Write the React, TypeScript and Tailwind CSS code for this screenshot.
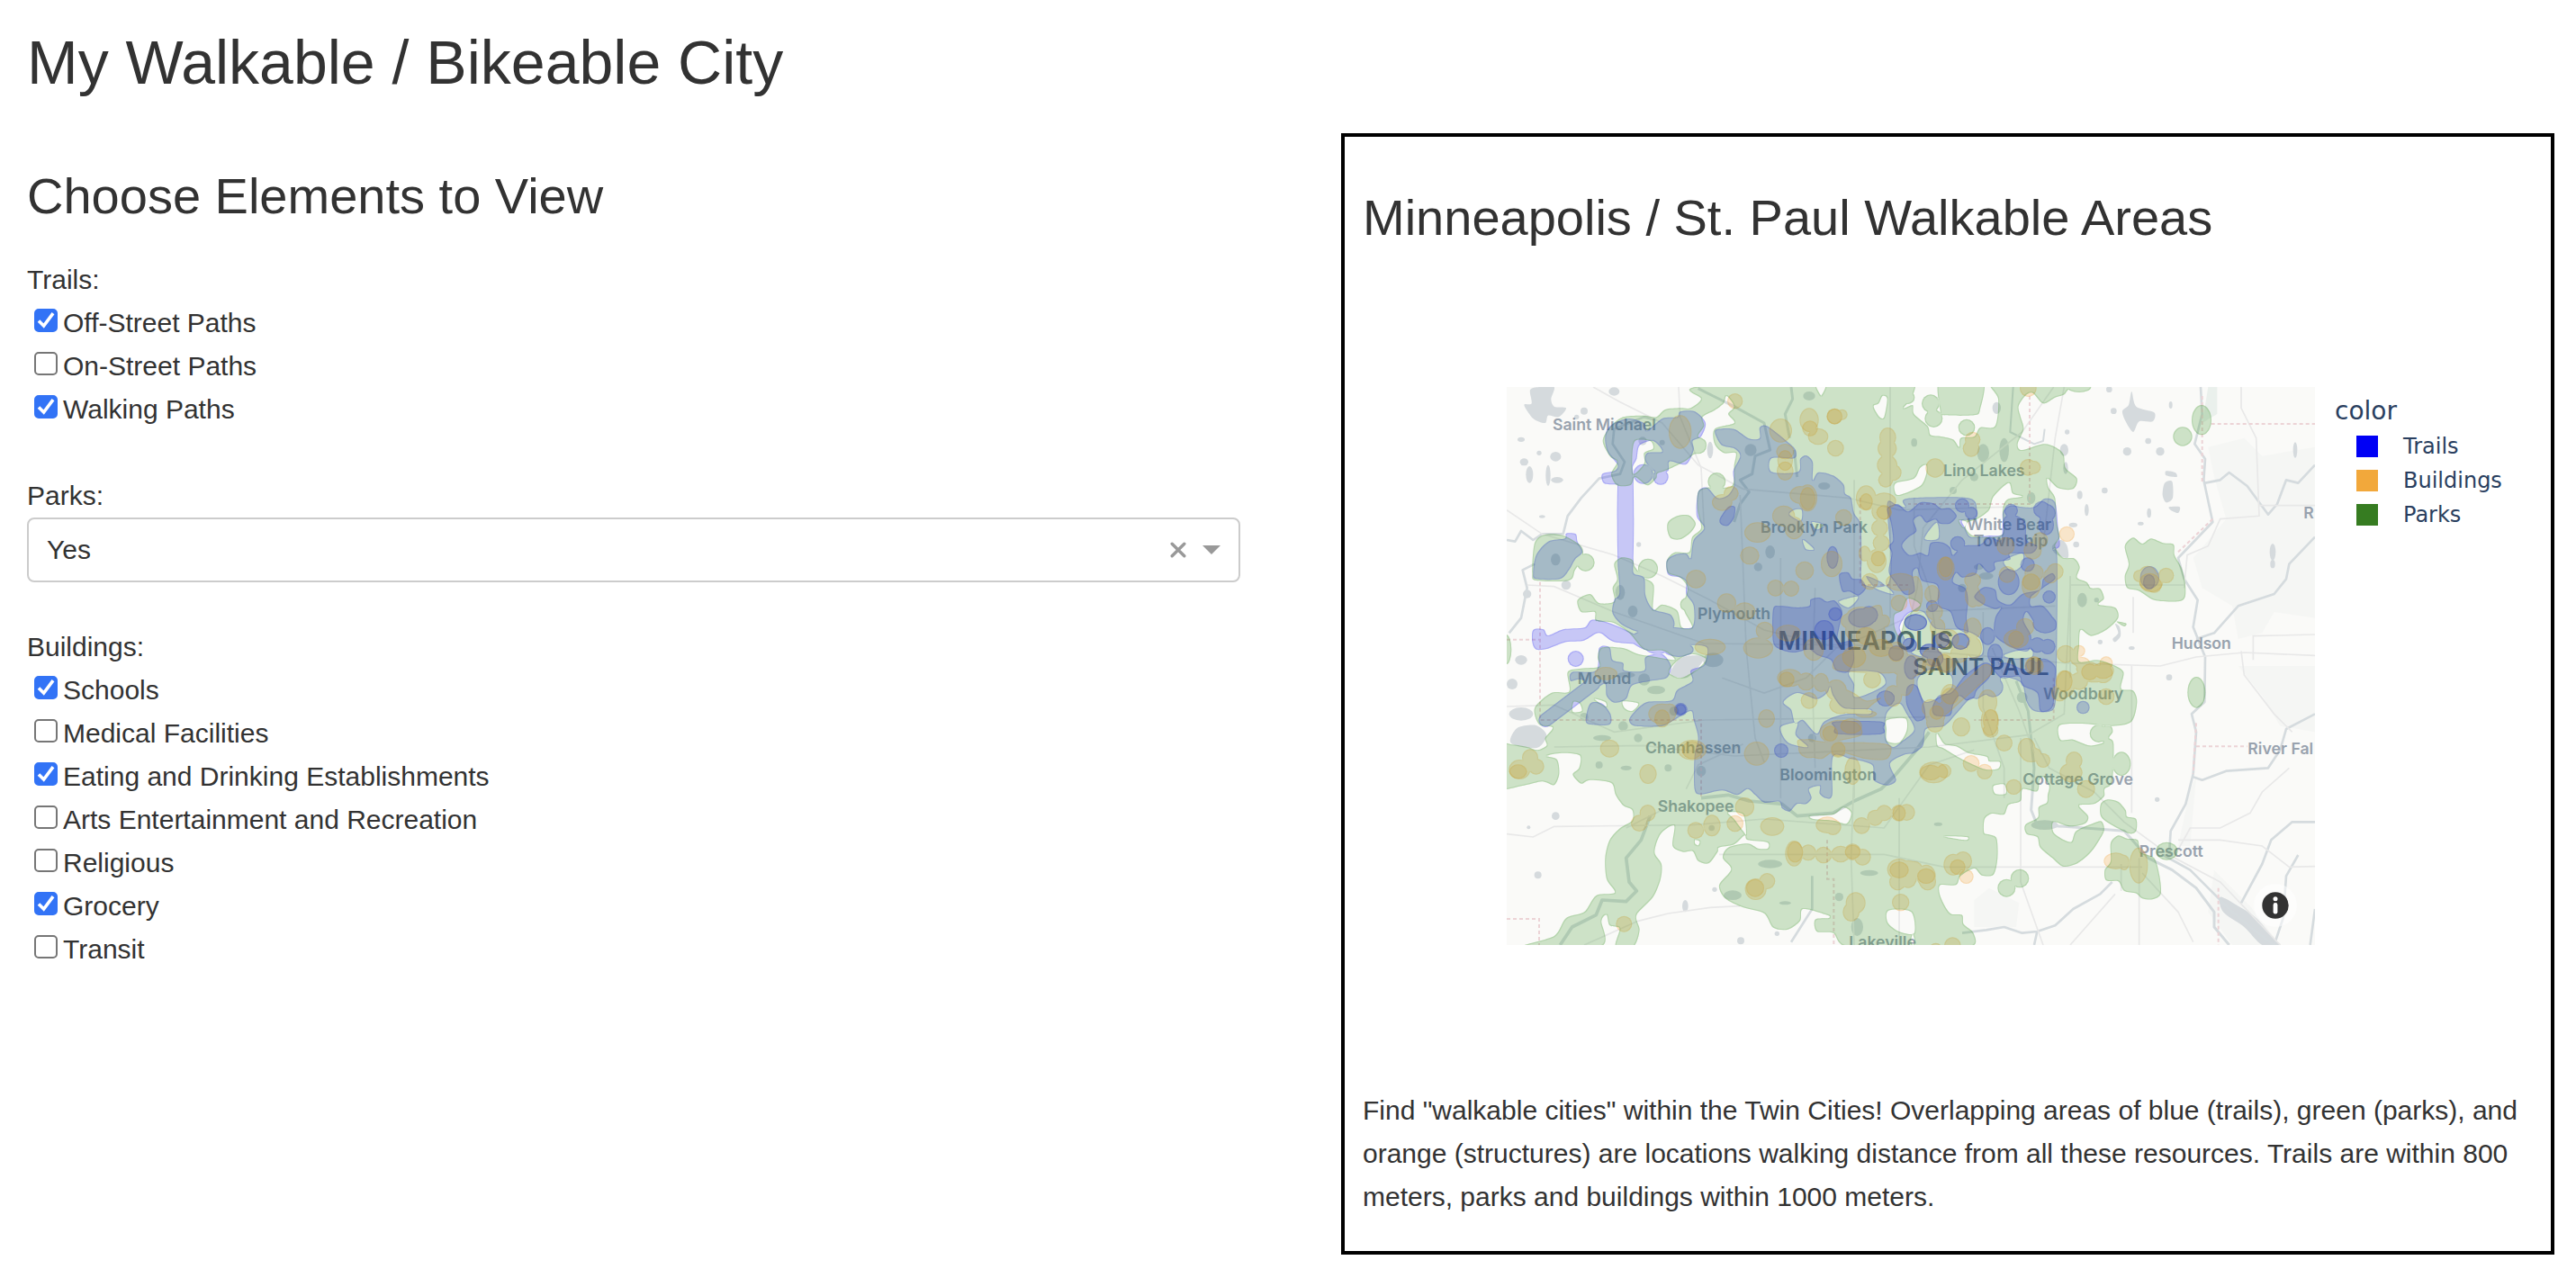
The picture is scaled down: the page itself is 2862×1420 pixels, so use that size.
import { useState } from "react";

type Option = { label: string; checked: boolean };

const trails: Option[] = [
  { label: "Off-Street Paths", checked: true },
  { label: "On-Street Paths", checked: false },
  { label: "Walking Paths", checked: true },
];

const buildings: Option[] = [
  { label: "Schools", checked: true },
  { label: "Medical Facilities", checked: false },
  { label: "Eating and Drinking Establishments", checked: true },
  { label: "Arts Entertainment and Recreation", checked: false },
  { label: "Religious", checked: false },
  { label: "Grocery", checked: true },
  { label: "Transit", checked: false },
];

function CheckGroup({ title, options }: { title: string; options: Option[] }) {
  return (
    <fieldset>
      <legend>{title}</legend>
      {options.map((o) => (
        <label key={o.label} className="flex w-fit items-start pl-2">
          <span className="relative mt-2 mr-1.5 size-[26px]">
            <input
              type="checkbox"
              defaultChecked={o.checked}
              className="peer block size-full appearance-none rounded-[5px] border-2 border-[#767676] bg-white checked:border-[#3273f6] checked:bg-[#3273f6]"
            />
            <svg viewBox="0 0 26 26" className="pointer-events-none invisible absolute inset-0 peer-checked:visible" fill="none" stroke="#fff" strokeWidth="3.6">
              <path d="M5 13.5L10.6 19 21 5.2" />
            </svg>
          </span>
          {o.label}
        </label>
      ))}
    </fieldset>
  );
}

/* Turns "x,y x,y ..." into a closed smooth curve through the points. */
function blob(points: string) {
  const p = points.trim().split(/\s+/).map((s) => s.split(",").map(Number));
  const n = p.length;
  let d = `M${p[0][0]} ${p[0][1]}`;
  for (let i = 0; i < n; i++) {
    const a = p[(i + n - 1) % n], b = p[i], c = p[(i + 1) % n], e = p[(i + 2) % n];
    const k = 7;
    d += `C${b[0] + (c[0] - a[0]) / k} ${b[1] + (c[1] - a[1]) / k} ${c[0] - (e[0] - b[0]) / k} ${c[1] - (e[1] - b[1]) / k} ${c[0]} ${c[1]}`;
  }
  return d + "Z";
}

function Discs({ at }: { at: string }) {
  return (
    <>
      {at.trim().split(/\s+/).map((s, i) => {
        const [x, y, rx, ry] = s.split(",").map(Number);
        return <ellipse key={i} cx={x} cy={y} rx={rx} ry={ry || rx} />;
      })}
    </>
  );
}

const parksMain = [
  "670,30 690,70 655,100 620,100 570,105 540,130 500,125 430,130 385,165 362,210 385,260 410,280 390,320 410,358 455,357 470,330 510,358 540,335 545,318 580,305 640,275 665,255 700,245 705,210 680,195 700,160 695,130 735,108 765,85 775,60 800,95 780,120 800,150 735,170 735,220 765,250 805,250 800,290 792,360 710,365 680,380 678,440 690,500 660,530 650,580 600,582 575,610 580,650 620,665 645,700 632,750 635,780 660,830 625,830 610,775 560,755 530,772 532,690 500,665 470,630 460,605 425,598 400,620 410,670 395,700 400,745 350,750 320,720 278,740 290,780 335,780 340,810 395,815 450,850 500,905 560,908 590,925 600,940 540,930 480,920 430,900 360,898 345,930 350,962 290,968 245,980 250,1045 190,1050 135,1100 150,1155 195,1165 170,1200 175,1225 145,1240 110,1230 60,1222 0,1222 0,1365 100,1358 160,1345 200,1357 217,1320 210,1272 175,1260 225,1250 285,1258 283,1300 262,1322 290,1352 320,1340 390,1350 405,1390 430,1425 460,1440 460,1475 420,1500 385,1540 370,1600 375,1670 402,1715 340,1725 300,1780 240,1800 200,1860 100,1895 355,1895 358,1810 375,1790 385,1825 418,1835 405,1895 465,1895 485,1840 475,1790 530,1730 555,1670 558,1620 535,1580 555,1520 600,1492 595,1560 630,1580 662,1578 680,1610 715,1618 745,1580 750,1565 800,1555 835,1525 845,1540 910,1548 912,1568 880,1568 845,1552 780,1565 762,1600 790,1638 750,1690 770,1735 830,1765 900,1785 930,1832 980,1838 1020,1810 1030,1770 1110,1790 1115,1800 1070,1805 1075,1845 1130,1850 1175,1895 1385,1895 1395,1850 1405,1895 1590,1895 1598,1850 1565,1820 1560,1790 1525,1787 1505,1765 1485,1720 1488,1690 1540,1690 1555,1660 1600,1635 1625,1658 1665,1655 1678,1600 1675,1535 1650,1522 1633,1515 1635,1470 1660,1452 1700,1455 1715,1423 1755,1410 1762,1370 1810,1378 1818,1340 1830,1330 1850,1360 1845,1390 1842,1415 1815,1430 1812,1465 1770,1490 1775,1520 1810,1530 1820,1565 1860,1600 1895,1628 1940,1620 1980,1590 2005,1560 2033,1510 2025,1478 1995,1485 1940,1510 1925,1545 1900,1540 1865,1515 1865,1480 1920,1495 1970,1485 1980,1460 1950,1425 2000,1420 2033,1395 2035,1370 2060,1345 2065,1220 2050,1200 2062,1180 2055,1160 2020,1165 2010,1200 2030,1215 1985,1225 1930,1205 1888,1205 1885,1158 1960,1152 2060,1160 2125,1145 2143,1080 2130,1042 2090,1035 2098,980 2060,955 2010,940 1950,945 1950,890 1955,840 1990,860 2040,840 2080,800 2070,765 2015,755 2033,735 2020,702 1990,700 1975,680 1943,665 1952,630 1935,602 1895,598 1870,560 1885,530 1875,480 1870,400 1848,365 1845,335 1880,367 1930,370 1943,335 1905,300 1898,255 1870,230 1830,220 1760,240 1745,220 1765,170 1755,130 1748,95 1770,60 1795,50 1830,85 1870,65 1905,50 1910,0 1655,0 1680,70 1670,160 1620,165 1600,195 1555,200 1550,230 1530,205 1490,195 1455,190 1445,160 1400,120 1395,90 1365,100 1395,60 1380,0 1090,0 1090,60 1075,0",
  "1295,60 1310,70 1300,130 1285,130 1265,95 1282,85",
  "1340,350 1400,335 1420,300 1440,290 1440,320 1420,360 1350,390 1335,375",
  "1580,480 1610,470 1650,440 1665,395 1715,350 1728,385 1760,395 1710,405 1695,440 1695,520 1640,530 1595,525 1572,500",
  "470,210 520,210 530,235 500,250 500,285 465,320 460,270",
  "590,965 620,935 660,920 705,935 690,960 655,985 620,1000 585,985",
  "1055,1460 1130,1455 1165,1432 1190,1450 1175,1485 1130,1475 1065,1470",
  "1310,1140 1370,1135 1375,1175 1350,1215 1310,1210 1308,1170",
  "1476,1185 1500,1220 1540,1228 1580,1250 1640,1262 1650,1278 1685,1280 1680,1302 1640,1305 1600,1290 1550,1265 1500,1235 1478,1225",
  "265,1080 285,1085 292,1110 262,1112",
  "780,1448 830,1455 840,1520 830,1510 800,1470",
  "1315,1775 1390,1780 1400,1850 1350,1845 1312,1815",
  "1500,1528 1575,1530 1570,1540",
  "1665,1360 1700,1355 1705,1385 1670,1385",
  "670,1540 685,1545 680,1558 670,1552",
  "335,1070 370,1080 372,1095",
  "430,1078 480,1085 460,1110 435,1100",
  "1335,790 1360,775 1380,735 1420,755 1390,780 1370,800 1352,860 1335,830",
  "1550,475 1575,480 1565,498",
  "2075,812 2107,818 2100,828",
];

const parksExtra = [
  "127,650 135,550 170,522 230,525 290,560 295,600 270,640 250,675 140,675",
  "580,480 610,460 650,458 672,485 655,515 620,538 590,535 578,510",
  "2102,560 2130,532 2160,552 2190,535 2230,550 2265,555 2268,590 2290,630 2303,680 2303,730 2280,745 2200,740 2150,710 2110,700 2102,660 2115,620",
  "2022,1420 2045,1405 2080,1412 2105,1440 2110,1462 2140,1470 2140,1510 2115,1518 2050,1485 2022,1460",
  "2055,1550 2080,1525 2110,1535 2145,1540 2155,1580 2200,1600 2218,1660 2222,1720 2195,1738 2160,1735 2140,1718 2100,1710 2080,1678 2040,1675 2035,1640 2055,1610",
  "1487,0 1487,110 1500,124 1600,124 1620,105 1628,0",
];

const trailMain = [
  "740,172 800,170 850,202 885,200 885,165 910,160 975,210 1005,240 1000,268 925,268 925,313 1013,313 1020,270 1040,258 1062,280 1062,340 1080,315 1130,325 1165,355 1170,385 1190,400 1200,450 1222,490 1225,600 1230,685 1310,690 1322,600 1310,420 1340,422 1370,430 1375,402 1580,400 1610,440 1605,470 1560,475 1570,500 1590,530 1650,525 1695,520 1695,450 1720,425 1760,430 1800,430 1835,402 1870,415 1880,500 1885,560 1860,575 1877,600 1875,980 1870,1090 1850,1112 1800,1110 1775,1080 1760,1020 1720,1000 1690,1000 1690,1050 1640,1055 1610,1070 1585,1070 1540,1120 1500,1160 1440,1170 1430,1225 1400,1250 1370,1255 1320,1285 1340,1340 1310,1358 1265,1340 1260,1290 1190,1270 1130,1262 1127,1390 1105,1400 1085,1385 1085,1360 1050,1370 1058,1400 1040,1420 1010,1420 985,1445 960,1435 950,1412 900,1415 870,1390 845,1370 810,1390 760,1375 690,1388 668,1370 668,1260 680,1200 665,1140 655,1110 600,1140 560,1160 470,1160 450,1140 470,1110 510,1080 590,1075 610,1040 660,1010 655,975 700,955 710,900 665,890 600,895 570,912 500,905 450,870 505,835 590,830 660,830 665,760 640,720 640,680 620,665 580,655 575,610 600,590 640,585 655,600 665,540 700,500 675,460 680,380 710,365 745,400 780,390 800,355 797,310 820,260 800,235 760,225 740,195",
  "965,1080 1010,1050 1075,1070 1110,1050 1120,1030 1130,1060 1165,1100 1250,1105 1250,1120 1170,1120 1100,1145 1075,1185 1030,1140 1003,1150 990,1105",
  "1185,980 1280,982 1303,1020 1240,1055 1200,1062 1200,1020",
  "955,1165 1010,1150 1005,1190 1045,1230 980,1215",
  "1308,1120 1350,1085 1375,1120 1400,1172 1360,1210 1330,1230 1305,1200",
  "1435,535 1475,482 1480,535",
  "1700,610 1760,585 1760,620 1740,640 1720,640",
  "1150,745 1210,728 1205,745 1180,765",
  "1000,440 1025,440 1022,475 985,455",
  "1060,480 1100,490 1075,505",
  "1030,540 1065,570 1040,570",
  "1240,660 1290,680 1330,720 1270,700",
  "1352,830 1380,785 1430,780 1470,835 1560,840 1620,870 1620,925 1500,935 1400,920 1365,860",
  "1415,1000 1460,970 1520,990 1525,1030 1490,1060 1440,1080 1415,1040",
  "1700,925 1740,910 1790,905 1790,930 1730,935",
];

const trailExtra = [
  "415,598 461,598 465,650 500,665 505,725 530,770 590,790 595,835 500,850 430,825 395,785 400,740 418,715",
  "400,150 450,135 500,150 510,175 560,135 610,130 620,112 670,112 705,150 690,195 662,210 665,240 640,288 585,278 580,310 540,315 505,280 510,250 560,245 530,210 485,225 475,270 461,300 461,355 400,355 365,350 360,320 400,310 412,290 380,250 370,210 375,175",
  "415,290 461,290 461,650 415,650",
  "130,650 140,590 180,545 235,535 240,518 272,520 278,545 295,580 270,605 250,640 220,670 140,670",
  "350,900 385,898 395,940 430,950 435,975 500,975 505,930 560,920 590,960 575,1000 520,1010 460,1025 440,1070 400,1082 375,1060 370,1020 340,1030 290,1005 255,1010 260,980 340,975",
  "305,1140 320,1085 360,1085 388,1120 385,1155 320,1155",
];

const trails2 = [
  "930,770 955,760 1010,765 1050,760 1055,738 1085,732 1108,745 1135,742 1160,775 1155,810 1145,880 1190,878 1200,940 1180,980 1140,975 1122,940 1080,925 1050,905 1000,915 955,905 930,880",
  "1150,655 1180,648 1195,668 1225,672 1240,700 1215,725 1185,712 1160,710",
  "1135,1145 1290,1145 1298,1165 1290,1187 1145,1187 1135,1165",
  "752,470 780,430 803,430 800,465 780,492 757,488",
];

const disc2 = "1100,840,33 1137,787,23 957,1242,24 622,1105,22 1128,598,20,38 1305,1068,30,26 2185,665,32,38 1225,800,45,32 1250,790,30 1790,960,20";

/* Saint Paul side, in its own local grid. */
const eastTrails2 = [
  "80,75 115,60 150,85 190,55 235,58 260,75 290,75 312,100 290,125 255,125 240,112 210,122 190,100 168,115 178,150 150,172 130,200 155,230 190,222 215,230 225,190 265,188 290,205 300,230 330,200 390,195 420,170 460,180 468,110 500,95 540,120 545,180 580,200 560,225 490,225 490,245 440,255 440,278 415,288 385,260 375,295 330,305 310,290 300,320 340,340 350,380 345,440 350,490 310,470 290,420 250,400 250,340 235,325 195,315 180,275 165,290 172,350 140,362 105,320 85,285 95,225 85,200 100,180 92,120",
  "400,338 440,345 450,380 490,395 530,360 590,345 600,310 630,290 640,310 600,340 560,370 560,400 600,400 640,450 640,480 600,490 570,455 545,420 535,450 560,500 550,550 500,540 440,500 440,440 460,405 440,410 400,395 370,370",
  "430,600 480,590 540,610 600,575 640,600 640,650 635,725 620,748 590,750 580,690 530,665 520,635 460,640",
  "310,670 340,630 400,590 430,600 420,640 380,680 370,705 345,715 320,700 300,730 290,765 240,765 230,740 250,700 290,690",
  "145,675 165,660 185,675 205,740 205,775 175,782 145,730",
];
const eastDiscs2 = "330,65,24 360,90,21 315,192,25 595,78,28 612,90,30 610,130,26,34 493,82,23 485,320,36,44 548,262,24 620,370,22 605,460,40,30 580,530,26 615,535,26 440,560,26,34 415,500,25,30 75,708,30,26 160,605,24,40 230,400,20 110,557,26";
const eastDiscsOpen = "175,455,38,28 325,518,30,28 260,515,28,26 220,550,32,24 240,575,28 155,530,24";

const orange = "803,77,26 620,180,38,56 955,175,38,40 1050,140,32,40 1080,195,34,28 1135,128,27 1160,122,18 1138,234,28 970,245,30,26 970,310,28,32 1312,198,28,33 1310,235,32 1310,290,34 1330,315,28 1305,340,25 790,385,25 760,415,34,28 1020,390,35,30 1045,400,32,45 965,460,38,35 1000,500,32,38 878,515,44,34 852,592,32,30 1165,465,28 1240,400,34,42 1300,410,40,28 1290,445,32 1285,500,28 1290,550,28 1275,610,33,40 1235,585,20,26 1252,678,28 1035,642,31 1125,620,36,44 938,700,28 990,702,27 673,670,33,31 775,750,32,32 835,778,36,30 902,842,30 980,850,42,28 720,897,52,28 880,900,50,35 1065,905,34,38 1350,750,28 1355,680,50,30 1195,810,40,30 1225,790,50,28 1270,850,36,40 1300,810,20,22 1405,720,24,60 985,1000,42,30 1040,1012,30 1090,1015,26,32 1050,1075,28 1140,1040,35 1155,1090,38,30 1240,1120,36,12 1330,1060,30,36 1260,1005,30 908,1135,28,31 875,1252,42,40 1050,1235,36,32 1147,1238,28 1195,1310,27,46 1285,1245,38,28 373,985,38,22 560,1120,46,35 585,1110,25 660,1240,48,34 385,1235,32,30 513,1320,29,33 120,1265,27,28 85,1305,36,33 140,1295,27 512,1450,27,28 484,1484,28 835,1430,32 803,1485,28 726,1492,29,36 672,1508,28 927,1495,40,31 1110,1490,38,28 1130,1497,27 1225,1492,28 1270,1466,27 1300,1450,27 1350,1450,28 1375,1448,28 1000,1585,30,43 1047,1582,27 1098,1590,28 1155,1587,32,28 1195,1580,28 1228,1597,28 910,1677,27 872,1704,36,36 433,1820,27 1350,1638,40,36 1380,1640,38,32 1345,1680,28 1355,1748,29 1205,1750,33,36 1190,1780,28,32 1400,1640,30 1780,35,28 1595,205,26 1590,235,28 1470,300,32 1780,298,28 1800,298,22 1909,520,26 1505,635,30,40 1705,560,30 1795,575,30 1820,540,26 1800,650,32,30 1790,690,32,45 1870,645,28 1855,660,25 1710,655,28 1595,675,28,26 1595,725,26,40 1595,835,30,36 1600,900,26,36 1615,740,22 1460,720,26,30 1468,780,28 1478,830,26,30 1770,830,30 1740,870,42,32 1510,870,40,34 1460,930,34,32 1505,950,36,34 1380,960,60,38 1340,915,36 1370,1010,30,50 1550,920,30 1800,960,32,30 1905,920,30 1940,940,18 1950,910,20 1960,950,26,20 2040,950,22 1980,970,40,24 2000,985,50,30 2030,985,32 1905,1020,32,45 1885,1050,28 2040,1062,28 1950,1010,30 1520,1060,32,40 1470,1120,35,40 1455,1100,30 1645,1080,32,42 1652,1145,30,48 1557,1163,30,32 1470,1150,30,32 1700,1217,28 1775,1235,30,35 1790,1255,35,26 1830,1275,24 1590,1285,28 1635,1312,26 1465,1315,48,36 1470,1315,40,30 1732,1363,26 1933,1275,28,30 1923,1315,38,32 1973,1370,30 1380,1665,30,35 1530,1622,32,36 1563,1610,30,32 1574,1662,24 1440,1660,32,38 1445,1680,28 1528,1892,28 1472,1905,22 2072,1610,40,28 2100,1615,18,26 2148,1625,31,60 2178,660,32,34 2190,680,40,34 2240,658,26 2150,660,20";

const orangeAreas = [
  "1190,790 1240,770 1290,760 1300,850 1320,890 1370,900 1385,960 1350,980 1290,985 1190,980 1130,970 1140,930 1200,895 1170,850",
  "1105,1035 1150,1030 1200,1050 1240,1075 1290,1065 1260,1090 1230,1115 1170,1115 1115,1060",
  "1090,1165 1140,1140 1210,1150 1225,1190 1150,1210 1130,1225 1090,1200",
  "1015,1205 1130,1215 1240,1215 1320,1225 1310,1270 1240,1270 1140,1245 1090,1270 1030,1250",
];

const orange2 = "1135,128,26 1053,168,26 970,275,26,34 1045,402,26,38 1240,412,22,28 1300,448,26,24 1280,602,24,26 660,1240,34,30 80,1312,30,24 560,1135,26,30 975,1005,26 1147,1238,24 1120,1185,26 1190,1160,36,26 1003,1580,27,35 1195,1580,26,24 1350,1640,32,28 1440,1660,30,26 870,1700,30,30 1350,1450,22,26 1545,1630,26 1655,1140,26,36 1655,1175,26,24 1455,1315,36,26 1500,1310,24 1505,630,24,34 1790,680,30,28 1800,955,26,28 1240,860,34,30 1200,930,40,36 1290,900,40,30 1340,920,26 1500,950,28,30 1740,870,26,28 2030,975,36,28 1985,980,28 1900,1010,28,36 2185,680,34,30 2200,690,26 1520,1060,28 1475,1115,24 1450,960,24";

function Area({ color, paths, children }: { color: string; paths?: string[][]; children?: React.ReactNode }) {
  return (
    <g fill={color} filter="url(#layer)">
      {paths?.map((group, i) => (
        <path key={i} fillRule="evenodd" d={group.map(blob).join("")} />
      ))}
      {children}
    </g>
  );
}

function MapLabel({ x, y, size = 53, fill = "#98a2ae", children }: { x: number; y: number; size?: number; fill?: string; children: string }) {
  return (
    <text x={x} y={y} fontSize={size} fill={fill}>
      {children}
    </text>
  );
}

function WalkMap() {
  return (
    <svg viewBox="42 30 2694 1860" role="img" aria-label="Map of walkable areas around Minneapolis and Saint Paul" className="block w-full bg-[#fafaf8]">
      <defs>
        <filter id="layer" filterUnits="userSpaceOnUse" x="-30" y="-30" width="2850" height="1980" colorInterpolationFilters="sRGB">
          <feMorphology in="SourceGraphic" operator="erode" radius="3" result="core" />
          <feComposite in="SourceGraphic" in2="core" operator="out" result="edge" />
          <feComponentTransfer in="edge" result="rim"><feFuncA type="linear" slope="0.16" /></feComponentTransfer>
          <feComponentTransfer in="SourceGraphic" result="body"><feFuncA type="linear" slope="0.22" /></feComponentTransfer>
          <feMerge><feMergeNode in="body" /><feMergeNode in="rim" /></feMerge>
        </filter>
      </defs>

      {/* terrain */}
      <g fill="#f5f6f4">
        <path d="M2380 230L2500 200 2560 260 2736 230V800L2600 780 2560 850 2480 870 2460 760 2360 700 2330 600 2440 470 2400 330ZM2480 960H2736V1180L2620 1160 2560 1060ZM1600 1740L1650 1700 1750 1750 1740 1830 1600 1830ZM2320 1370L2340 1330 2320 1560 2280 1560ZM2400 1640L2520 1760 2620 1890H2460L2380 1780Z" />
        <path d="M2380 30H2410V120L2360 150Z" fill="#eaf0ec" />
      </g>
      {/* lakes */}
      <g fill="#d5dadd">
        <path d={blob("120,40 150,30 200,30 190,70 200,95 240,100 215,130 180,125 170,150 130,135 100,90 125,85")} />
        <path d={blob("2094,110 2115,90 2125,45 2140,95 2200,115 2195,145 2150,145 2130,180 2105,145")} />
        <path d={blob("595,965 620,935 660,925 700,930 680,965 640,1000 590,990")} />
        <path d={blob("55,1200 80,1165 140,1158 175,1190 150,1230 110,1232 60,1220")} />
        <path d={blob("1860,560 1890,540 1910,560 1912,600 1870,585")} />
        <path d={blob("2235,350 2260,345 2262,400 2240,415 2228,390")} />
        <path d={blob("2240,310 2270,315 2275,330 2240,325")} />
        <path d={blob("2250,430 2285,430 2280,450 2255,440")} />
        <path d={blob("2070,820 2085,830 2088,860 2070,880 2062,870 2080,850")} />
        <path d={blob("2420,1730 2480,1760 2540,1800 2600,1870 2620,1890 2560,1890 2500,1830 2430,1780")} />
        <Discs at="90,205,12,8 205,262,18,16 100,280,14,12 150,250,8 118,322,12,28 180,325,8,35 210,340,20,10 160,462,10,5 482,555,8 560,215,9 400,45,18,14 300,110,12 275,130,8 720,240,10,28 205,605,16,20 110,720,14 90,940,20,16 60,1020,18 90,1120,40,22 205,1460,13 146,1657,12 115,1498,6 637,1760,10,20 735,1705,8 822,1876,12 943,1852,8 1900,240,14,20 1905,300,8,20 1952,390,9,14 1975,440,7,20 2035,375,10 2065,110,10 2180,210,10 2110,245,14 2220,245,14 2183,450,7,16 2155,485,10,6 2255,90,6,12 1930,490,14,8 1940,555,10 2008,740,8 2050,38,10 2125,900,10,6 2020,880,8 2250,998,10 2210,1405,8 2670,240,7,26 2595,580,10,28 2595,620,8,14 1910,180,8 725,1500,10 420,715,16,25 462,778,16,20 240,690,16 880,630,14 1050,60,20,15 730,940,34,24 1400,215,10,14 1675,100,14,20 1630,250,20,30 1700,240,16,40 1600,330,14 1530,375,12 1790,400,14,20 1615,630,16,10 1640,660,24,12 1560,700,14 1760,1065,18 1960,740,16,24 795,1724,30,16 920,1620,40,14 1210,1830,20,30 1150,1730,14 970,1750,20,6 1480,1487,14,6 1835,1490,45,16 500,1005,20 540,1040,30,14 440,990,30,10 430,1160,16 300,1130,14 360,1200,30,10 600,1110,16 480,1200,14 690,1310,16,18 350,1290,12 440,1300,18,8 580,1300,12 1250,1650,30,10 495,210,14 1060,1200,14 920,580,16,22 855,240,20 1100,360,20,12" />
      </g>
      {/* rivers */}
      <g fill="none" stroke="#d5dbde" strokeWidth="8" strokeLinejoin="round">
        <path d="M42 540L70 545 90 510 130 540 160 520 230 520 245 460 290 400 350 335 420 320 435 280 395 220 400 170 500 130 540 140" />
        <path d="M135 620L95 640 110 700 90 800 50 850" />
        <path d="M680 35L730 60 800 95 900 150 920 240 870 260 860 320 820 340 850 380 820 420 800 480M990 30L995 70 970 120 985 200M1000 240L1010 330" strokeWidth="9" />
        <path d="M520 1460L490 1540 440 1600 450 1680 475 1710 440 1745 360 1740 340 1790 260 1830 220 1890" strokeWidth="11" />
        <path d="M690 1400L780 1390 850 1410 960 1420 1010 1460 1130 1450 1200 1410 1290 1370 1340 1320 1400 1250 1450 1180" strokeWidth="11" />
        <path d="M1740 1010L1780 1110 1800 1300 1790 1440 1810 1490 1900 1495 1970 1500 2100 1510 2180 1600 2260 1640 2340 1700 2400 1780 2400 1830 2450 1890" strokeWidth="9" />
        <path d="M2355 30L2360 120 2335 220 2370 270 2365 340 2395 480 2280 600 2300 670 2345 740 2330 830 2370 930 2368 1080 2325 1120 2340 1180 2330 1320 2305 1420 2255 1510 2250 1590" strokeWidth="8" />
        <path d="M2370 350L2420 340 2450 315 2510 360 2580 455 2610 420 2640 340 2680 350 2736 290M2340 870L2400 850 2480 760 2600 720 2640 670 2650 620 2736 530" strokeWidth="8" />
        <path d="M2330 1330L2360 1340 2440 1310 2580 1300 2620 1240 2640 1170 2736 1120M2490 1750L2560 1620 2590 1540 2660 1480 2736 1480" />
        <path d="M2230 1590L2320 1640 2440 1760 2520 1830 2600 1890M2600 1890L2630 1800 2640 1660 2680 1590M2736 1770L2720 1890" strokeWidth="8" />
        <path d="M1560 1850L1640 1840 1700 1830 1760 1850 1810 1845 1870 1825 1930 1770 2020 1720 2060 1680M1810 1845L1800 1890M1060 1660L1060 1770 990 1880" />
        <path d="M1730 30L1720 180 1800 220 1830 210 1835 170" strokeWidth="6" />
      </g>
      {/* roads */}
      <g fill="none" stroke="#e8e8e8" strokeWidth="5">
        <path d="M42 440L160 520 400 590 560 660 720 740 900 840 1150 900" />
        <path d="M330 30L420 80 560 150 680 290 830 370 1180 400 1350 440 1700 430" />
        <path d="M615 30L620 130 690 300 700 500M110 690L200 695 400 780 700 885 1200 890 1900 950 2220 960 2340 930 2500 915 2736 925" />
        <path d="M820 390L830 640 840 900 870 1200 900 1280M955 600V1400M1070 700L1060 1000 1070 1300M1200 340V1400M1320 30V800M1380 830L1410 700 1430 500 1560 340 1760 180 1865 30" />
        <path d="M42 1095L200 1090 400 1180 700 1140 1450 1130M200 1230L500 1225 800 1260 1450 1230 1780 1190 1900 1120 1920 690 2300 690M42 1520L130 1530 200 1495 660 1490 900 1470 1300 1500 1450 1290 1600 1240" />
        <path d="M300 1890L480 1810 580 1785 720 1765 820 1760M750 1588H1300L1500 1630H2160M1350 1400V1890M1200 1300L1190 1600 1200 1890M1755 1200V1680L1830 1890M2125 960V1450M2150 1600V1890M2070 1720L1920 1890M2090 1710V1620M2160 1650L2280 1780 2330 1880" />
        <path d="M1800 1200L1850 1300 2000 1380 2100 1480 2250 1590 2420 1680 2620 1890M2270 1590L2320 1500 2420 1500 2520 1450 2560 1380 2650 1300M2280 1540L2420 1540 2560 1560 2650 1630 2736 1628M2130 30" />
        <path d="M2490 30L2490 100 2540 200 2550 460 2420 470 2380 560 2310 590 2300 700M2550 425H2736M2490 910L2500 990 2600 1120 2660 1180M2530 940V860L2736 855M1900 30L1870 200 1830 560M1660 900L1750 1110 1800 1250M1920 660L1920 1000M2130 730V850" />
        <path d="M760 1000L900 1050 1040 1000 1140 900 1240 860 1420 780 1630 770 1870 760M1630 780V1100L1700 1300V1400M1400 400L1400 560 1450 700 1480 900M600 1420L440 1500M640 1370L680 1290 830 1220" />
      </g>
      {/* county and state borders */}
      <g fill="none" stroke="#ecd3d6" strokeWidth="6" strokeDasharray="12 9">
        <path d="M153 680V1140H690V1400M42 872H153M42 1803H150V1890M1785 60V420H1380M1785 430M1220 400V690H1380M1110 1540V1670H1132V1890M1865 1000V1140H1600M2360 60V350M2390 153H2736M2340 1228H2510M2414 1700V1890M2340 1150L2330 1320M2280 580L2395 470" />
      </g>

      {/* place names */}
      <g fontFamily="Inter, 'Open Sans', sans-serif" fontWeight="600">
        <MapLabel x={195} y={175}>Saint Michael</MapLabel>
        <MapLabel x={888} y={515}>Brooklyn Park</MapLabel>
        <MapLabel x={678} y={805}>Plymouth</MapLabel>
        <MapLabel x={1497} y={327}>Lino Lakes</MapLabel>
        <MapLabel x={1576} y={507}>White Bear</MapLabel>
        <MapLabel x={1598} y={560}>Township</MapLabel>
        <MapLabel x={2258} y={902}>Hudson</MapLabel>
        <MapLabel x={2698} y={467}>R</MapLabel>
        <MapLabel x={278} y={1020}>Mound</MapLabel>
        <MapLabel x={504} y={1250}>Chanhassen</MapLabel>
        <MapLabel x={545} y={1446}>Shakopee</MapLabel>
        <MapLabel x={952} y={1342}>Bloomington</MapLabel>
        <MapLabel x={1830} y={1072}>Woodbury</MapLabel>
        <MapLabel x={1762} y={1356}>Cottage Grove</MapLabel>
        <MapLabel x={2512} y={1254}>River Fal</MapLabel>
        <MapLabel x={2150} y={1596}>Prescott</MapLabel>
        <MapLabel x={1183} y={1900}>Lakeville</MapLabel>
        <MapLabel x={946} y={906} size={84} fill="#5b6880">MINNEAPOLIS</MapLabel>
        <MapLabel x={1396} y={989} size={77} fill="#5b6880">SAINT PAUL</MapLabel>
      </g>

      <Area color="#1414f0" paths={[trailMain, ...trailExtra.map((t) => [t])]}>
        <path d={blob("130,840 165,838 180,858 230,838 300,832 325,806 380,815 460,850 500,885 400,880 350,850 300,875 240,880 180,902 140,905 127,880")} />
        <path d="M172 1140L330 1020" fill="none" stroke="#1414f0" strokeWidth="48" strokeLinecap="round" />
        <Discs at="497,320,33 555,330,26 272,936,27 1663,1030,34 1963,1098,22 2183,680,20,26 545,900,40,20 615,905,50,25" />
        <g transform="translate(1230 360)">
          <Discs at={eastDiscsOpen} />
        </g>
      </Area>
      <Area color="#1414f0" paths={trails2.map((t) => [t])}>
        <Discs at={disc2} />
        <g transform="translate(1230 360)">
          {eastTrails2.map((t) => (
            <path key={t} d={blob(t)} />
          ))}
          <Discs at={eastDiscs2} />
          <Discs at={eastDiscsOpen} />
        </g>
      </Area>
      <Area color="#1414f0">
        <Discs at="1100,840,33 1137,787,23 622,1105,18" />
      </Area>
      <Area color="#f29a2a" paths={orangeAreas.map((t) => [t])}>
        <Discs at={orange} />
        <path d="M1500 1100L1640 975" fill="none" stroke="#f29a2a" strokeWidth="44" strokeLinecap="round" />
      </Area>
      <Area color="#f29a2a">
        <Discs at={orange2} />
      </Area>
      <Area color="#2f8c1c" paths={[parksMain, ...parksExtra.map((p) => [p])]}>
        <Discs at="742,345,30 513,635,33 305,615,30 640,755,20,22 2295,195,32 2358,140,33,50 2341,1048,30,52 2091,1286,31,40 1752,1668,31 1708,1700,30 2242,1577,36,30 40,905,18,50 1455,85,30 1465,135,30 1380,65,22 1575,165,28 1950,30,40,18 2015,1185,30 680,225,28" />
      </Area>
    </svg>
  );
}

const legend = [
  { label: "Trails", swatch: "bg-[#0000f5]" },
  { label: "Buildings", swatch: "bg-[#f2a83b]" },
  { label: "Parks", swatch: "bg-[#367c21]" },
];

export default function App() {
  const [parks, setParks] = useState("Yes");
  return (
    <main className="min-h-screen bg-white pt-[30px] pr-6 pb-6 pl-[30px] font-['Liberation_Sans',Arial,sans-serif] text-[30px] leading-[48px] text-[#323232]">
      <h1 className="text-[68px] leading-[78px]">My Walkable / Bikeable City</h1>
      <div className="mt-10 grid grid-cols-2 gap-28">
        <section className="pt-9">
          <h2 className="mb-[35px] text-[56px] leading-[68px]">Choose Elements to View</h2>
          <div className="flex flex-col gap-12">
            <CheckGroup title="Trails:" options={trails} />
            <div>
              <label htmlFor="parks" className="block">Parks:</label>
              <div className="relative">
                <select
                  id="parks"
                  value={parks}
                  onChange={(e) => setParks(e.target.value)}
                  className="block h-[72px] w-full appearance-none rounded-lg border-2 border-[#ccc] bg-white px-5"
                >
                  <option value="" />
                  <option>Yes</option>
                  <option>No</option>
                </select>
                <div className="pointer-events-none absolute inset-y-0 right-[22px] flex items-center gap-[18px]">
                  <button type="button" aria-label="Clear value" onClick={() => setParks("")} className="pointer-events-auto">
                    <svg viewBox="0 0 18 18" className="size-[18px]" stroke="#999" strokeWidth="3.4" strokeLinecap="round">
                      <path d="M2.2 2.2L15.8 15.8M15.8 2.2L2.2 15.8" />
                    </svg>
                  </button>
                  <svg viewBox="0 0 20 10" className="h-2.5 w-5" fill="#999">
                    <path d="M0 0H20L10 10Z" />
                  </svg>
                </div>
              </div>
            </div>
            <CheckGroup title="Buildings:" options={buildings} />
          </div>
        </section>

        <section className="border-4 border-black px-5 pt-14 pb-9">
          <h2 className="text-[56px] leading-[68px]">Minneapolis / St. Paul Walkable Areas</h2>
          <figure className="mt-[154px] mb-40 ml-40 flex items-start gap-[22px]">
            <div className="relative flex-1">
              <WalkMap />
              <button type="button" aria-label="Map information" className="absolute right-5 bottom-5 flex size-12 items-center justify-center rounded-full bg-white/50">
                <svg viewBox="0 0 30 30" className="size-[30px]">
                  <circle cx="15" cy="15" r="14.7" fill="#333" />
                  <circle cx="15" cy="7.7" r="2.5" fill="#fff" />
                  <rect x="12.6" y="12" width="4.8" height="12.6" rx="2.4" fill="#fff" />
                </svg>
              </button>
            </div>
            <figcaption className="w-[220px] pt-[7px] font-['DejaVu_Sans',Verdana,sans-serif] text-[24px] leading-[38px] text-[#2a3f5f]">
              <p className="text-[28px] leading-[40px]">color</p>
              <ul>
                {legend.map((l) => (
                  <li key={l.label} className="flex items-center gap-7 pl-6">
                    <span className={`size-6 ${l.swatch}`} />
                    {l.label}
                  </li>
                ))}
              </ul>
            </figcaption>
          </figure>
          <p>
            Find "walkable cities" within the Twin Cities! Overlapping areas of blue (trails), green (parks), and orange
            (structures) are locations walking distance from all these resources. Trails are within 800 meters, parks and
            buildings within 1000 meters.
          </p>
        </section>
      </div>
    </main>
  );
}
